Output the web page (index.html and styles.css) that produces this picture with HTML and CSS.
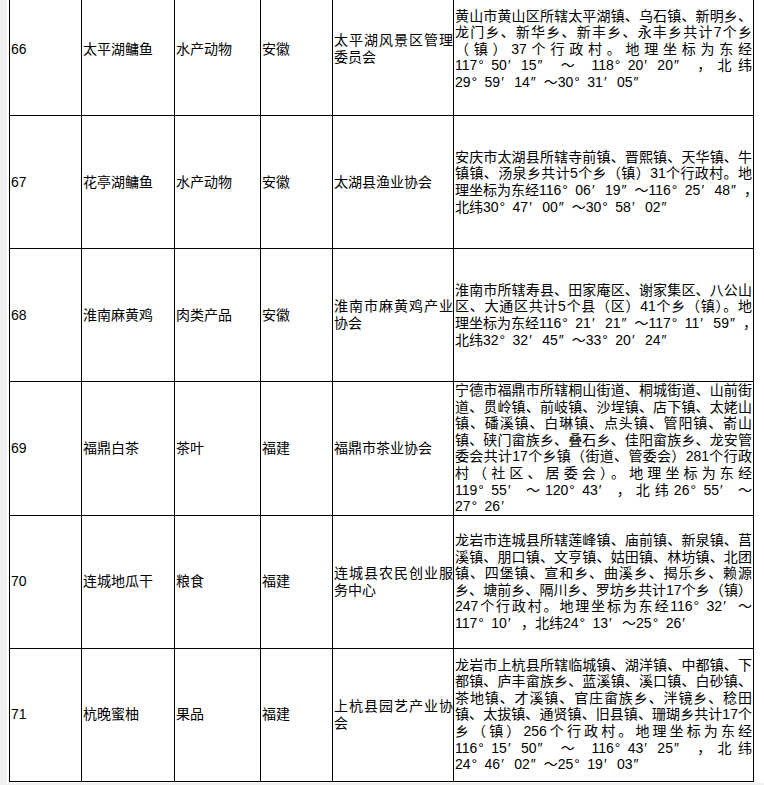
FILE: index.html
```html
<!DOCTYPE html>
<html lang="zh-CN">
<head>
<meta charset="utf-8">
<title>地理标志产品</title>
<link rel="stylesheet" href="styles.css">
</head>
<body>
<div class="page">
  <table class="sheet">
    <colgroup>
      <col class="c-no"><col class="c-name"><col class="c-cat"><col class="c-prov"><col class="c-org"><col class="c-area">
    </colgroup>
    <tbody>
      <tr>
        <td>66</td>
        <td>太平湖鳙鱼</td>
        <td>水产动物</td>
        <td>安徽</td>
        <td class="org">太平湖风景区管理委员会</td>
        <td class="area"><span class="ln">黄山市黄山区所辖太平湖镇、乌石镇、新明乡、</span><span class="ln">龙门乡、新华乡、新丰乡、永丰乡共计7个乡</span><span class="ln">（镇）37个行政村。地理坐标为东经</span><span class="ln">117<span class="m">°</span>50<span class="m">′</span>15<span class="m">″</span> ～ 118<span class="m">°</span>20<span class="m">′</span>20<span class="m">″</span> ，北纬</span><span class="end">29<span class="m">°</span>59<span class="m">′</span>14<span class="m">″</span>～30<span class="m">°</span>31<span class="m">′</span>05<span class="m">″</span></span></td>
      </tr>
      <tr>
        <td>67</td>
        <td>花亭湖鳙鱼</td>
        <td>水产动物</td>
        <td>安徽</td>
        <td class="org">太湖县渔业协会</td>
        <td class="area"><span class="ln">安庆市太湖县所辖寺前镇、晋熙镇、天华镇、牛</span><span class="ln">镇镇、汤泉乡共计5个乡（镇）31个行政村。地</span><span class="ln">理坐标为东经116<span class="m">°</span>06<span class="m">′</span>19<span class="m">″</span>～116<span class="m">°</span>25<span class="m">′</span>48<span class="m">″</span>，</span><span class="end">北纬30<span class="m">°</span>47<span class="m">′</span>00<span class="m">″</span>～30<span class="m">°</span>58<span class="m">′</span>02<span class="m">″</span></span></td>
      </tr>
      <tr>
        <td>68</td>
        <td>淮南麻黄鸡</td>
        <td>肉类产品</td>
        <td>安徽</td>
        <td class="org">淮南市麻黄鸡产业协会</td>
        <td class="area"><span class="ln">淮南市所辖寿县、田家庵区、谢家集区、八公山</span><span class="ln">区、大通区共计5个县（区）41个乡（镇）。地</span><span class="ln">理坐标为东经116<span class="m">°</span>21<span class="m">′</span>21<span class="m">″</span>～117<span class="m">°</span>11<span class="m">′</span>59<span class="m">″</span>，</span><span class="end">北纬32<span class="m">°</span>32<span class="m">′</span>45<span class="m">″</span>～33<span class="m">°</span>20<span class="m">′</span>24<span class="m">″</span></span></td>
      </tr>
      <tr>
        <td>69</td>
        <td>福鼎白茶</td>
        <td>茶叶</td>
        <td>福建</td>
        <td class="org">福鼎市茶业协会</td>
        <td class="area"><span class="ln">宁德市福鼎市所辖桐山街道、桐城街道、山前街</span><span class="ln">道、贯岭镇、前岐镇、沙埕镇、店下镇、太姥山</span><span class="ln">镇、磻溪镇、白琳镇、点头镇、管阳镇、嵛山</span><span class="ln">镇、硖门畲族乡、叠石乡、佳阳畲族乡、龙安管</span><span class="ln">委会共计17个乡镇（街道、管委会）281个行政</span><span class="ln">村（社区、居委会）。地理坐标为东经</span><span class="ln">119<span class="m">°</span>55<span class="m">′</span>～120<span class="m">°</span>43<span class="m">′</span>，北纬26<span class="m">°</span>55<span class="m">′</span>～</span><span class="end">27<span class="m">°</span>26<span class="m">′</span></span></td>
      </tr>
      <tr>
        <td>70</td>
        <td>连城地瓜干</td>
        <td>粮食</td>
        <td>福建</td>
        <td class="org">连城县农民创业服务中心</td>
        <td class="area"><span class="ln">龙岩市连城县所辖莲峰镇、庙前镇、新泉镇、莒</span><span class="ln">溪镇、朋口镇、文亨镇、姑田镇、林坊镇、北团</span><span class="ln">镇、四堡镇、宣和乡、曲溪乡、揭乐乡、赖源</span><span class="ln">乡、塘前乡、隔川乡、罗坊乡共计17个乡（镇）</span><span class="ln">247个行政村。地理坐标为东经116<span class="m">°</span>32<span class="m">′</span>～</span><span class="end">117<span class="m">°</span>10<span class="m">′</span>，北纬24<span class="m">°</span>13<span class="m">′</span>～25<span class="m">°</span>26<span class="m">′</span></span></td>
      </tr>
      <tr>
        <td>71</td>
        <td>杭晚蜜柚</td>
        <td>果品</td>
        <td>福建</td>
        <td class="org">上杭县园艺产业协会</td>
        <td class="area"><span class="ln">龙岩市上杭县所辖临城镇、湖洋镇、中都镇、下</span><span class="ln">都镇、庐丰畲族乡、蓝溪镇、溪口镇、白砂镇、</span><span class="ln">茶地镇、才溪镇、官庄畲族乡、泮镜乡、稔田</span><span class="ln">镇、太拔镇、通贤镇、旧县镇、珊瑚乡共计17个</span><span class="ln">乡（镇）256个行政村。地理坐标为东经</span><span class="ln">116<span class="m">°</span>15<span class="m">′</span>50<span class="m">″</span> ～ 116<span class="m">°</span>43<span class="m">′</span>25<span class="m">″</span> ，北纬</span><span class="end">24<span class="m">°</span>46<span class="m">′</span>02<span class="m">″</span>～25<span class="m">°</span>19<span class="m">′</span>03<span class="m">″</span></span></td>
      </tr>
    </tbody>
  </table>
</div>
</body>
</html>
```

FILE: styles.css
```css
html, body {
  margin: 0;
  padding: 0;
}

body {
  background: #f0f0f0;
  font-family: "Liberation Sans", "Noto Sans CJK SC", sans-serif;
  font-size: 14px;
  color: #000;
}

.page {
  margin-left: 7px;
  height: 783px;
  background: #fff;
  overflow: hidden;
}

.sheet {
  margin-top: -18px;
  margin-left: 2px;
  border-collapse: separate;
  border-spacing: 0;
  table-layout: fixed;
  width: 744px;
  border-left: 1px solid #000;
  border-top: 1px solid #000;
}

.c-no { width: 72px; }
.c-name { width: 93px; }
.c-cat { width: 86px; }
.c-prov { width: 72px; }
.c-org { width: 121px; }
.c-area { width: 300px; }

.sheet td {
  box-sizing: border-box;
  height: 133px;
  padding: 0 0 0 1px;
  border-right: 1px solid #000;
  border-bottom: 1px solid #000;
  vertical-align: middle;
  line-height: 16.6px;
  text-align: left;
}

.sheet td.org {
  text-align: justify;
}

.sheet td.area {
  padding-right: 1px;
}

.ln {
  display: block;
  white-space: nowrap;
  text-align: justify;
  text-align-last: justify;
}

.end {
  display: block;
  white-space: nowrap;
  text-align: left;
}

/* full-width coordinate marks (° ′ ″), as in the source font */
.m {
  display: inline-block;
  width: 14px;
  padding-left: 1px;
  box-sizing: border-box;
  text-align: left;
}
```
